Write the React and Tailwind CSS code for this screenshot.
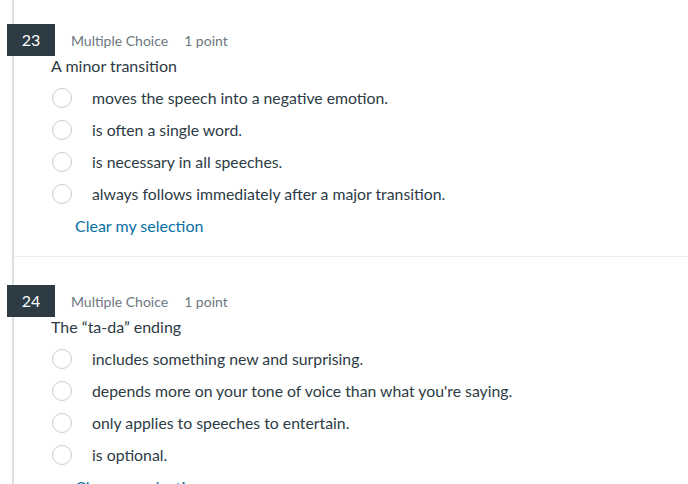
import React from "react";

const questions = [
  {
    n: "23",
    q: "A minor transition",
    opts: [
      "moves the speech into a negative emotion.",
      "is often a single word.",
      "is necessary in all speeches.",
      "always follows immediately after a major transition.",
    ],
  },
  {
    n: "24",
    q: "The \u201cta-da\u201d ending",
    opts: [
      "includes something new and surprising.",
      "depends more on your tone of voice than what you're saying.",
      "only applies to speeches to entertain.",
      "is optional.",
    ],
  },
];

function Question({ data, last }) {
  return (
    <div className={last ? "" : "border-b border-[#eeeeee] pb-[14px] mb-[28px]"}>
      <div className="flex items-center h-[32px]">
        <div className="-ml-[7px] w-[48px] h-[32px] bg-[#2d3b45] text-[#ffffff] flex items-center justify-center text-[16px]">
          {data.n}
        </div>
        <div className="ml-[16px] text-[14px] text-[#6b7780] flex gap-[16px]">
          <span>Multiple Choice</span>
          <span>1 point</span>
        </div>
      </div>
      <div className="ml-[37px] h-[20px] flex items-center text-[16px] text-[#2d3b45]">{data.q}</div>
      <div className="mt-[6px]">
        {data.opts.map((o) => (
          <div key={o} className="flex items-center h-[32px]">
            <div className="ml-[38px] w-[20px] h-[20px] rounded-full border border-[#c7cdd1] bg-white" />
            <div className="ml-[20px] text-[15.8px] text-[#2d3b45]">{o}</div>
          </div>
        ))}
        <div className="flex items-center h-[32px]">
          <span className="ml-[61px] text-[16px] text-[#0770a3]">Clear my selection</span>
        </div>
      </div>
    </div>
  );
}

export default function App() {
  return (
    <div className="w-[688px] h-[484px] overflow-hidden bg-white" style={{ fontFamily: "Lato, 'Liberation Sans', sans-serif" }}>
      <div className="ml-[12px] border-l-2 border-[#dcdfe1] pt-[24px] min-h-[600px]">
        {questions.map((q, i) => (
          <Question key={q.n} data={q} last={i === questions.length - 1} />
        ))}
      </div>
    </div>
  );
}
